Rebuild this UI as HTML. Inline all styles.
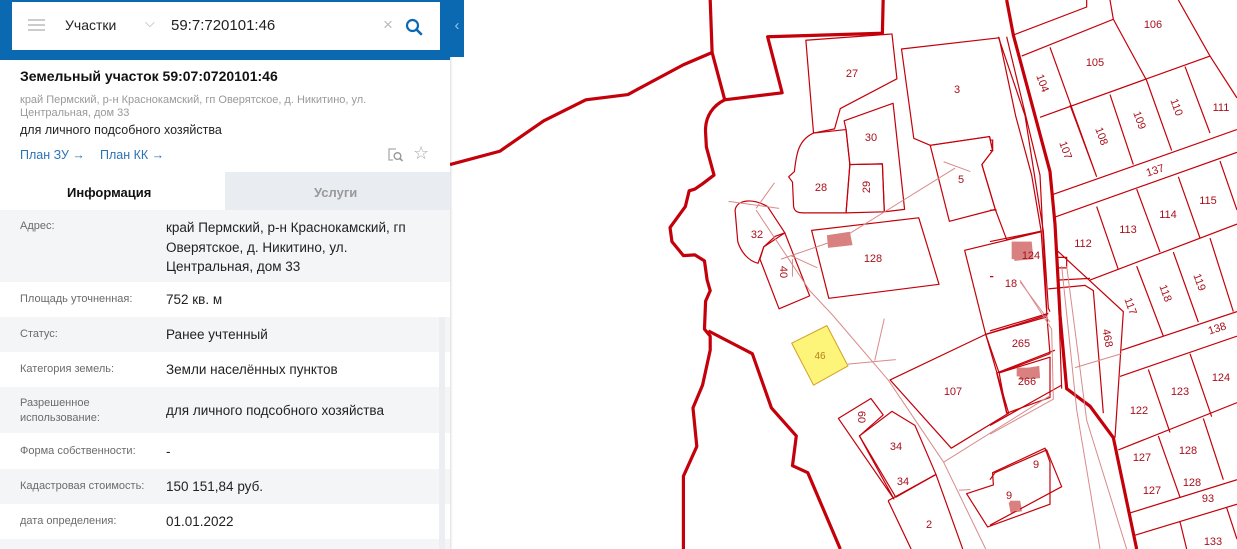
<!DOCTYPE html>
<html><head><meta charset="utf-8"><style>
*{margin:0;padding:0;box-sizing:border-box}
body{width:1237px;height:549px;overflow:hidden;background:#fff;font-family:"Liberation Sans","DejaVu Sans",sans-serif;position:relative}
#map{position:absolute;left:0;top:0}
#panel{position:absolute;left:0;top:0;width:450px;height:549px;background:#fff;box-shadow:1px 0 2px rgba(0,0,0,.15)}
.hdr{position:absolute;left:0;top:0;width:450px;height:60px;background:#0b69b2}
.tab{position:absolute;left:450px;top:0;width:14px;height:57px;background:#0b69b2;color:#9fc3e6;font-size:15px;text-align:center;line-height:52px}
.sb{position:absolute;left:12px;top:2px;width:428px;height:48px;background:#fff}
.abs{position:absolute;white-space:nowrap}
.row{position:absolute;left:0;width:450px}
.g{background:#f4f5f7}
.lab{position:absolute;left:20px;font-size:11px;color:#6b6b6b;line-height:15px}
.val{position:absolute;left:166px;font-size:13.5px;color:#222;line-height:20px}
</style></head><body>
<svg id="map" width="1237" height="549" viewBox="0 0 1237 549">
<g transform="translate(450,0) scale(0.38265,0.35014)" fill="none" stroke-linejoin="round">
<g stroke="#c4000a" stroke-width="3.2" vector-effect="non-scaling-stroke">
<path vector-effect="non-scaling-stroke" d="M0,470 L130,432 L245,345 L355,285 L465,270 L610,185 L685,150 L680,0"/>
<path vector-effect="non-scaling-stroke" d="M685,150 L718,285 L868,265 L830,105 L1130,95 L1132,0"/>
<path vector-effect="non-scaling-stroke" d="M718,285 C690,300 665,330 668,380 L670,420 L690,500 L660,525 L640,540 L625,545 L615,590 L575,650 L580,690 L610,730 L640,728 L665,745 L672,800 L680,830 L668,860 L665,940 L680,960 L680,1000 L660,1100 L635,1165 L645,1275 L610,1360 L610,1568"/>
<path vector-effect="non-scaling-stroke" d="M675,945 L790,1010 L840,1165 L905,1245 L895,1330 L935,1350 L1020,1568"/>
</g>
<g stroke="#c4000a" stroke-width="1.2">
<polygon vector-effect="non-scaling-stroke" points="930,115 1155,97 1168,225 1020,310 1005,368 950,380"/>
<polygon vector-effect="non-scaling-stroke" points="1180,140 1435,108 1478,330 1520,500 1545,660 1455,685 1425,598 1390,470 1418,430 1410,390 1255,415 1212,395"/>
<polygon vector-effect="non-scaling-stroke" points="1030,345 1158,295 1188,598 1135,605 1130,468 1045,470 1035,370"/>
<polygon vector-effect="non-scaling-stroke" points="1045,470 1130,468 1135,605 1035,608"/>
<path vector-effect="non-scaling-stroke" d="M1035,370 L950,380 C910,400 905,440 900,490 L885,505 L895,520 L898,590 C900,605 910,608 925,608 L1035,608 L1045,470 Z"/>
<polygon vector-effect="non-scaling-stroke" points="1255,415 1410,390 1418,430 1390,470 1425,598 1305,632"/>
<polygon vector-effect="non-scaling-stroke" points="945,658 1225,622 1278,812 990,852"/>
<path vector-effect="non-scaling-stroke" d="M745,600 C750,570 790,565 830,590 L875,665 L820,705 L805,752 C780,745 760,720 752,690 Z"/>
<polygon vector-effect="non-scaling-stroke" points="850,675 875,665 940,845 860,882 810,740 820,705"/>
<polygon vector-effect="non-scaling-stroke" points="1345,715 1545,662 1560,900 1400,955"/>
<polygon vector-effect="non-scaling-stroke" points="1400,955 1560,905 1568,1010 1435,1065"/>
<polygon vector-effect="non-scaling-stroke" points="1435,1065 1568,1020 1568,1135 1455,1180"/>
<polygon vector-effect="non-scaling-stroke" points="1150,1085 1400,955 1460,1180 1310,1280"/>
<polygon vector-effect="non-scaling-stroke" points="1015,1195 1100,1138 1132,1185 1070,1245 1160,1425"/>
<polygon vector-effect="non-scaling-stroke" points="1070,1245 1155,1175 1215,1215 1270,1355 1165,1420"/>
<path vector-effect="non-scaling-stroke" d="M1145,1430 L1270,1355 L1340,1568 M1145,1430 L1205,1568"/>
<polygon vector-effect="non-scaling-stroke" points="1350,1410 1420,1385 1418,1350 1555,1280 1568,1320 1568,1440 1405,1505"/>
</g>
<g stroke="#d98a8a" stroke-width="1">
<path vector-effect="non-scaling-stroke" d="M728,575 L860,595 M800,600 L940,830 L1000,900 L1145,1085 L1290,1320 L1400,1568 M800,595 L848,522 M865,740 L1025,680 L1320,480 M1290,462 L1360,490 M890,730 L960,765 M1040,1040 L1165,1027 M1110,1030 L1135,910 M1290,1320 L1568,1130 M1490,805 L1568,920 M1330,1400 L1360,1398 M895,740 L895,790"/>
</g>
<g fill="#d98080" stroke="none">
<polygon points="985,672 1045,662 1052,700 988,708"/>
<polygon points="1468,700 1520,690 1525,740 1475,745"/>
<polygon points="1485,1055 1540,1045 1542,1080 1490,1085"/>
<polygon points="1460,1435 1490,1430 1495,1460 1465,1465"/>
</g>
<polygon points="893,980 985,930 1040,1045 950,1100" fill="#fdf57a" stroke="#d4a020" stroke-width="1" vector-effect="non-scaling-stroke"/>
</g>
<g transform="translate(990,0) scale(0.33333,0.35014)" fill="none">
<path stroke="#c4000a" stroke-width="3.2" vector-effect="non-scaling-stroke" d="M50,0 L70,100 L180,490 L195,640 L210,900 L230,1110 L300,1160 L370,1250 L440,1568"/>
<g stroke="#c4000a" stroke-width="1.2">
<path vector-effect="non-scaling-stroke" d="M25,105 L105,330 L160,660 L175,880 L180,890 M50,105 L150,500 L170,885 M190,600 L200,700 L215,1110 M70,100 L290,20 L290,0 M95,160 L370,55 L360,0 M370,55 L470,230 L545,430 M150,335 L660,160 M565,0 L660,160 L741,280 M180,135 L320,505 M240,300 L320,505 M360,270 L430,470 M585,190 L660,380 M190,555 L741,370 M195,620 L741,435 M300,800 L741,640 M320,590 L385,770 M440,540 L510,720 M565,505 L630,680 M690,460 L741,600 M440,760 L520,960 M550,720 L625,920 M660,680 L730,890 M395,1000 L741,890 M390,1075 L741,960 M475,1055 L540,1235 M600,1010 L665,1190 M385,1285 L741,1150 M505,1245 L570,1420 M640,1195 L700,1370 M420,1465 L741,1370 M430,1530 L741,1440 M570,1490 L590,1568 M710,1450 L741,1540 M195,710 L400,890 L375,1250 M200,735 L230,735 L230,765 L205,765 Z M175,825 L285,815 L310,830 L340,1180 M200,800 L300,795 M0,690 L155,660 M0,945 L175,895 M20,1065 L195,1000 M0,1215 L215,1100 M0,1370 L15,1350 L170,1285 L215,1390 L0,1500 M0,400 L8,400 L8,430 L0,430 M0,600 L20,600 M20,1065 L50,1180 M0,790 L10,790"/>
</g>
<path stroke="#d98a8a" stroke-width="1" vector-effect="non-scaling-stroke" d="M90,800 L185,940 L190,1140 L0,1240 M255,1050 L395,1010 M215,760 L260,1170 L330,1568 M230,760 L290,1200 L410,1568"/>
<g fill="#d98080"><rect x="65" y="690" width="60" height="50"/><rect x="80" y="1050" width="65" height="25"/><rect x="60" y="1430" width="30" height="30"/></g>
</g>
<g font-family="Liberation Sans, sans-serif" font-size="11" fill="#a8101c" text-anchor="middle">
<text x="852" y="77">27</text><text x="957" y="93">3</text><text x="871" y="141">30</text><text x="821" y="191">28</text>
<text x="866" y="187" transform="rotate(-90 866 187)" dy="4">29</text><text x="961" y="183">5</text><text x="757" y="238">32</text>
<text x="873" y="262">128</text><text x="784" y="272" transform="rotate(90 784 272)" dy="4">40</text><text x="820" y="359" fill="#b8801c" font-size="10">46</text>
<text x="1031" y="259">124</text><text x="1011" y="287">18</text><text x="1021" y="347">265</text><text x="1027" y="385">266</text>
<text x="953" y="395">107</text><text x="862" y="417" transform="rotate(90 862 417)" dy="4">60</text><text x="896" y="450">34</text>
<text x="903" y="485">34</text><text x="1036" y="468">9</text><text x="1009" y="499">9</text><text x="929" y="528">2</text>
<text x="1153" y="28">106</text><text x="1095" y="66">105</text><text x="1043" y="83" transform="rotate(70 1043 83)" dy="4">104</text>
<text x="1177" y="107" transform="rotate(70 1177 107)" dy="4">110</text><text x="1221" y="111">111</text>
<text x="1102" y="136" transform="rotate(70 1102 136)" dy="4">108</text><text x="1140" y="120" transform="rotate(70 1140 120)" dy="4">109</text>
<text x="1066" y="150" transform="rotate(70 1066 150)" dy="4">107</text><text x="1155" y="170" transform="rotate(-18 1155 170)" dy="4">137</text>
<text x="1208" y="204">115</text><text x="1168" y="218">114</text><text x="1128" y="233">113</text><text x="1083" y="247">112</text>
<text x="1200" y="282" transform="rotate(70 1200 282)" dy="4">119</text><text x="1166" y="293" transform="rotate(70 1166 293)" dy="4">118</text>
<text x="1131" y="306" transform="rotate(70 1131 306)" dy="4">117</text><text x="1108" y="338" transform="rotate(80 1108 338)" dy="4">468</text>
<text x="1217" y="328" transform="rotate(-18 1217 328)" dy="4">138</text><text x="1221" y="381">124</text><text x="1180" y="395">123</text>
<text x="1139" y="414">122</text><text x="1188" y="454">128</text><text x="1142" y="461">127</text><text x="1152" y="494">127</text>
<text x="1192" y="486">128</text><text x="1208" y="502">93</text><text x="1213" y="545">133</text>
</g>
</svg>
<div id="panel">
<div class="hdr"></div>
<div class="tab">‹</div>
<div class="sb">
 <div class="abs" style="left:16px;top:17px;width:17px;height:2px;background:#ccc;box-shadow:0 5px 0 #ccc,0 10px 0 #ccc"></div>
 <div class="abs" style="left:53px;top:15px;font-size:14px;color:#222">Участки</div>
 <div class="abs" style="left:133px;top:13px;font-size:13px;color:#aaa">⌵</div>
 <div class="abs" style="left:159px;top:15px;font-size:15px;color:#222">59:7:720101:46</div>
 <div class="abs" style="left:371px;top:13px;font-size:17px;color:#bbb">×</div>
 <svg class="abs" style="left:393px;top:16px" width="18" height="18" viewBox="0 0 18 18"><circle cx="7.5" cy="7.5" r="5.5" fill="none" stroke="#0b69b2" stroke-width="2.2"/><path d="M11.5 11.5 L16 16" stroke="#0b69b2" stroke-width="2.6" stroke-linecap="round"/></svg>
</div>
<div class="abs" style="left:20px;top:68px;font-size:14px;font-weight:bold;color:#111">Земельный участок 59:07:0720101:46</div>
<div class="abs" style="left:20px;top:94px;font-size:11px;color:#999;line-height:12.5px">край Пермский, р-н Краснокамский, гп Оверятское, д. Никитино, ул.<br>Центральная, дом 33</div>
<div class="abs" style="left:20px;top:123px;font-size:12.5px;color:#222">для личного подсобного хозяйства</div>
<div class="abs" style="left:20px;top:148px;font-size:12.5px;color:#2a74b8">План ЗУ →</div>
<div class="abs" style="left:100px;top:148px;font-size:12.5px;color:#2a74b8">План КК →</div>
<svg class="abs" style="left:387px;top:147px" width="18" height="16" viewBox="0 0 18 16"><path d="M9 2 H2 V13 H6" fill="none" stroke="#aaa" stroke-width="1.3"/><circle cx="10.5" cy="9" r="3.3" fill="none" stroke="#999" stroke-width="1.4"/><path d="M13 11.5 L15.5 14" stroke="#999" stroke-width="1.6"/></svg>
<div class="abs" style="left:413px;top:143px;font-size:18px;color:#aaa">☆</div>
<div class="abs" style="left:225px;top:172px;width:225px;height:38px;background:#e9ecf0"></div>
<div class="abs" style="left:67px;top:185px;font-size:13px;font-weight:bold;color:#111">Информация</div>
<div class="abs" style="left:314px;top:185px;font-size:13px;font-weight:bold;color:#999">Услуги</div>
<div class="row g" style="top:210px;height:72px"></div>
<div class="row g" style="top:317px;height:35px"></div>
<div class="row g" style="top:387px;height:46px"></div>
<div class="row g" style="top:469px;height:35px"></div>
<div class="row g" style="top:539px;height:10px"></div>
<div class="abs" style="left:439px;top:317px;width:6px;height:232px;background:#eceef1"></div>
<div class="lab" style="top:219px">Адрес:</div>
<div class="val" style="top:218px;line-height:19.5px">край Пермский, р-н Краснокамский, гп<br>Оверятское, д. Никитино, ул.<br>Центральная, дом 33</div>
<div class="lab" style="top:292px">Площадь уточненная:</div><div class="val" style="top:290px">752 кв. м</div>
<div class="lab" style="top:327px">Статус:</div><div class="val" style="top:325px">Ранее учтенный</div>
<div class="lab" style="top:362px">Категория земель:</div><div class="val" style="top:360px">Земли населённых пунктов</div>
<div class="lab" style="top:396px">Разрешенное<br>использование:</div><div class="val" style="top:401px">для личного подсобного хозяйства</div>
<div class="lab" style="top:444px">Форма собственности:</div><div class="val" style="top:442px">-</div>
<div class="lab" style="top:479px">Кадастровая стоимость:</div><div class="val" style="top:477px">150 151,84 руб.</div>
<div class="lab" style="top:514px">дата определения:</div><div class="val" style="top:512px">01.01.2022</div>
</div>
</body></html>
